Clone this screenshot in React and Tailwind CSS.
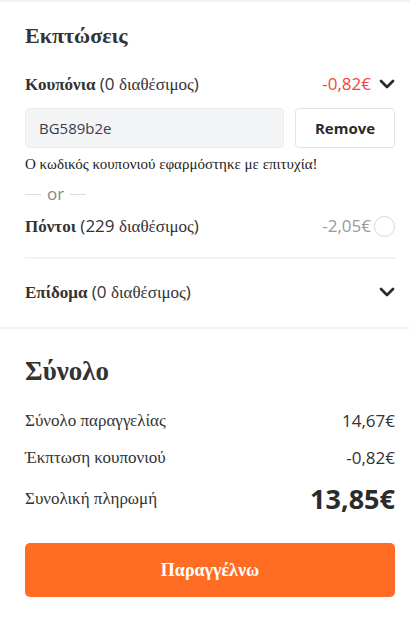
import React from 'react';

const serif = "font-['Liberation_Serif',serif]";
const sans = "font-['Open_Sans',sans-serif]";

const Chevron = () => (
  <svg width="16" height="10" viewBox="0 0 16 10" fill="none">
    <path d="M2 2 L8 8 L14 2" stroke="#2b2b2b" strokeWidth="2.8" strokeLinecap="round" strokeLinejoin="round" />
  </svg>
);

// label like "Κουπόνια (0 διαθέσιμος)" with greek in serif and digits in sans
const Label = ({ title, count }) => (
  <span className="text-[17px] text-[#333]">
    <b className={serif}>{title}</b>{' '}
    <span className={sans}>({count} </span>
    <span className={serif}>διαθέσιμος</span>
    <span className={sans}>)</span>
  </span>
);

export default function App() {
  return (
    <div className="w-full bg-white border-t-2 border-[#f4f4f4] text-[#333]">
      <div className="pl-[25px] pr-[15px] pt-[20px] pb-[23px]">
        <h2 className={`${serif} text-[22px] font-bold leading-[28px] text-[#333]`}>Εκπτώσεις</h2>

        <div className="mt-[22px] flex items-center justify-between h-[24px]">
          <Label title="Κουπόνια" count="0" />
          <div className="flex items-center gap-[8px]">
            <span className={`${sans} text-[17px] text-[#f5453a]`}>-0,82€</span>
            <Chevron />
          </div>
        </div>

        <div className="mt-[12px] flex gap-[11px]">
          <div className={`${sans} flex-1 h-[40px] rounded-[4px] border border-[#ececec] bg-[#f3f4f6] px-[13px] flex items-center text-[15px] text-[#3c3c4e]`}>
            BG589b2e
          </div>
          <button className={`${sans} w-[100px] h-[40px] rounded-[4px] border border-[#e3e3e3] bg-white text-[15px] font-bold text-[#2b2b2b]`}>
            Remove
          </button>
        </div>

        <p className={`${serif} mt-[7px] text-[15px] leading-[18px] text-[#222]`}>
          Ο κωδικός κουπονιού εφαρμόστηκε με επιτυχία!
        </p>

        <div className="mt-[11px] flex items-center gap-[6px]">
          <span className="w-[16px] h-px bg-[#ddd]" />
          <span className={`${sans} text-[17px] leading-[20px] text-[#888]`}>or</span>
          <span className="w-[16px] h-px bg-[#ddd]" />
        </div>

        <div className="mt-[10px] flex items-center justify-between h-[24px]">
          <Label title="Πόντοι" count="229" />
          <div className="flex items-center gap-[3px]">
            <span className={`${sans} text-[17px] text-[#999]`}>-2,05€</span>
            <span className="w-[21px] h-[21px] rounded-full border border-[#d6d6d6]" />
          </div>
        </div>

        <div className="mt-[19px] h-[2px] bg-[#f3f3f3]" />

        <div className="mt-[21px] flex items-center justify-between h-[24px]">
          <Label title="Επίδομα" count="0" />
          <Chevron />
        </div>
      </div>

      <div className="h-[2px] bg-[#f3f3f3]" />

      <div className="pl-[25px] pr-[15px] pt-[25px] pb-[24px]">
        <h2 className={`${serif} text-[27px] font-bold leading-[34px] text-[#333]`}>Σύνολο</h2>

        <div className="mt-[21px] flex items-center justify-between h-[24px]">
          <span className={`${serif} text-[17px] text-[#333]`}>Σύνολο παραγγελίας</span>
          <span className={`${sans} text-[17px] text-[#333]`}>14,67€</span>
        </div>
        <div className="mt-[13px] flex items-center justify-between h-[24px]">
          <span className={`${serif} text-[17px] text-[#333]`}>Έκπτωση κουπονιού</span>
          <span className={`${sans} text-[17px] text-[#333]`}>-0,82€</span>
        </div>
        <div className="mt-[13px] flex items-center justify-between h-[32px]">
          <span className={`${serif} text-[17px] text-[#333]`}>Συνολική πληρωμή</span>
          <span className={`${sans} text-[27px] font-bold text-[#2b2b2b]`}>13,85€</span>
        </div>

        <button className={`${serif} mt-[28px] w-full h-[54px] rounded-[5px] bg-[#ff6d25] text-white text-[18px] font-bold`}>
          Παραγγέλνω
        </button>
      </div>
    </div>
  );
}
